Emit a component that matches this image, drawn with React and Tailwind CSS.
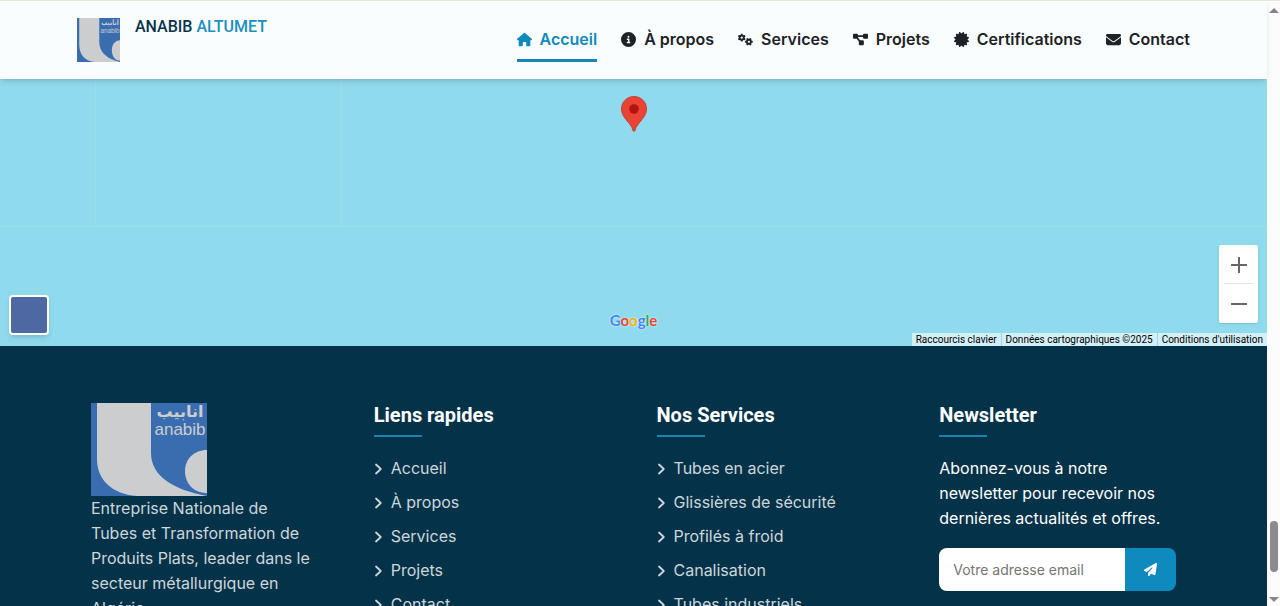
import React, { useState } from "react";
import {
  FaHouse,
  FaCircleInfo,
  FaGears,
  FaDiagramProject,
  FaCertificate,
  FaEnvelope,
  FaPaperPlane,
} from "react-icons/fa6";

const navItems = [
  { label: "Accueil", icon: FaHouse },
  { label: "À propos", icon: FaCircleInfo },
  { label: "Services", icon: FaGears },
  { label: "Projets", icon: FaDiagramProject },
  { label: "Certifications", icon: FaCertificate },
  { label: "Contact", icon: FaEnvelope },
];

const quickLinks = ["Accueil", "À propos", "Services", "Projets", "Contact"];

const services = [
  "Tubes en acier",
  "Glissières de sécurité",
  "Profilés à froid",
  "Canalisation",
  "Tubes industriels",
];

function Logo({ className }) {
  return (
    <svg
      className={className}
      viewBox="0 0 116 93"
      preserveAspectRatio="none"
      role="img"
      aria-label="Anabib"
    >
      <rect width="116" height="93" fill="#3a6db0" />
      <path
        d="M6 0H60V50C60 74 84 87 116 93H46C20 91 6 76 6 56Z"
        fill="#cbcdce"
      />
      <path d="M116 47C103 47 94 56 94 68C94 81 103 90 116 90Z" fill="#cbcdce" />
      <text
        x="89"
        y="14"
        textAnchor="middle"
        fill="#cbcdce"
        fontFamily="DejaVu Sans, sans-serif"
        fontWeight="700"
        fontSize="16"
      >
        انابيب
      </text>
      <text
        x="89"
        y="32"
        textAnchor="middle"
        fill="#cbcdce"
        fontFamily="Liberation Sans, sans-serif"
        fontSize="17"
      >
        anabib
      </text>
    </svg>
  );
}

function Header() {
  return (
    <header className="relative z-10 border-t border-[#e0ebd6] bg-[#fafdfe] shadow-md">
      <div className="mx-auto flex h-[78px] max-w-[1113px] items-center justify-between">
        <a href="#accueil" className="flex items-start gap-[15px]">
          <Logo className="h-11 w-[43px]" />
          <span className="font-[Roboto] text-base leading-[18px] font-medium text-[#05334a]">
            ANABIB <span className="text-[#1a8fc0]">ALTUMET</span>
          </span>
        </a>
        <nav className="flex gap-6">
          {navItems.map(({ label, icon: Icon }, i) => (
            <a
              key={label}
              href="#"
              className={
                i === 0
                  ? "flex items-center gap-2 border-b-3 border-[#1485b5] pt-[9px] pb-2 font-semibold text-[#0f8abb]"
                  : "flex items-center gap-2 border-b-3 border-transparent pt-[9px] pb-2 font-semibold text-[#1d2226]"
              }
            >
              <Icon className="h-[15px] w-auto" />
              {label}
            </a>
          ))}
        </nav>
      </div>
    </header>
  );
}

function MapSection() {
  return (
    <section
      aria-label="Carte"
      className="relative h-[267px] bg-[#90daee] font-[Roboto]"
    >
      {/* tile seams */}
      <div className="absolute top-0 left-[95px] h-[147px] w-[247px] border border-t-0 border-[#99ddef]" />
      <div className="absolute top-[147px] left-0 w-full border-t border-[#99ddef]" />

      <svg
        className="absolute top-[17px] left-1/2 h-9 w-[26px] -translate-x-1/2"
        viewBox="0 0 26 36"
      >
        <path
          d="M13 .5C6 .5.5 6 .5 13c0 4 1.800 7 4.500 10.500C8.500 28 11 30 12 34.500q1 2 2 0C15 30 17.500 28 21 23.500 23.700 20 25.500 17 25.500 13 25.500 6 20 .5 13 .5Z"
          fill="#ea4335"
          stroke="#c5413a"
          strokeWidth="1"
        />
        <circle cx="13" cy="13" r="4.800" fill="#b31412" />
      </svg>

      <button
        aria-label="Vue satellite"
        className="absolute bottom-[11px] left-[9px] size-10 rounded-sm border-2 border-white bg-[#4e68a4] shadow-md"
      />

      <div className="absolute bottom-[14px] left-1/2 -translate-x-1/2 font-[Lato] text-[15px] leading-6 font-bold text-[#4285f4] [text-shadow:0_0_2px_#fff]">
        G<span className="text-[#ea4335]">o</span>
        <span className="text-[#f4b400]">o</span>g
        <span className="text-[#34a853]">l</span>
        <span className="text-[#ea4335]">e</span>
      </div>

      <div className="absolute right-[9px] bottom-[23px] flex w-[39px] flex-col items-center rounded-xs bg-white shadow">
        <button
          aria-label="Zoom avant"
          className="flex h-[39px] w-full items-center justify-center"
        >
          <svg className="size-4" viewBox="0 0 16 16" fill="#666">
            <path d="M7 0h2v7h7v2H9v7H7V9H0V7h7Z" />
          </svg>
        </button>
        <div className="absolute top-[38px] h-px w-[29px] bg-[#e6e6e6]" />
        <button
          aria-label="Zoom arrière"
          className="flex h-[39px] w-full items-center justify-center"
        >
          <svg className="size-4" viewBox="0 0 16 16" fill="#666">
            <path d="M0 7h16v2H0Z" />
          </svg>
        </button>
      </div>

      <div className="absolute right-0 bottom-0 flex gap-px text-[10px] leading-[13px] text-black">
        <button className="bg-[#d3eff7] px-1">Raccourcis clavier</button>
        <span className="bg-[#d3eff7] px-1">
          Données cartographiques ©2025
        </span>
        <a href="#" className="bg-[#d3eff7] px-1">
          Conditions d'utilisation
        </a>
      </div>
    </section>
  );
}

function FooterTitle({ children }) {
  return (
    <h4 className="mb-[19px] font-[Roboto] text-xl leading-6 font-bold text-white">
      {children}
      <span className="mt-2 block h-0.5 w-12 bg-[#1485b5]" />
    </h4>
  );
}

function FooterLinks({ title, links }) {
  return (
    <div>
      <FooterTitle>{title}</FooterTitle>
      <ul className="space-y-[9px]">
        {links.map((link) => (
          <li key={link}>
            <a
              href="#"
              className="flex items-center gap-2 leading-[25px] whitespace-nowrap text-[#cdd6db]"
            >
              <svg
                className="h-3 w-[9px]"
                viewBox="0 0 9 12"
                fill="none"
                stroke="currentColor"
                strokeWidth="1.8"
                strokeLinecap="round"
                strokeLinejoin="round"
              >
                <path d="M2 1.500L6.800 6 2 10.500" />
              </svg>
              {link}
            </a>
          </li>
        ))}
      </ul>
    </div>
  );
}

function Footer() {
  const [email, setEmail] = useState("");

  return (
    <footer className="bg-[#043248] pt-[57px] pb-12">
      <div className="mx-auto grid max-w-[1085px] grid-cols-4 gap-[46px]">
        <div>
          <Logo className="h-[93px] w-[116px]" />
          <p className="max-w-[224px] leading-[25px] text-[#cdd6db]">
            Entreprise Nationale de Tubes et Transformation de Produits Plats,
            leader dans le secteur métallurgique en Algérie.
          </p>
        </div>
        <FooterLinks title="Liens rapides" links={quickLinks} />
        <FooterLinks title="Nos Services" links={services} />
        <div>
          <FooterTitle>Newsletter</FooterTitle>
          <p className="leading-[25px] text-white">
            Abonnez-vous à notre newsletter pour recevoir nos dernières
            actualités et offres.
          </p>
          <form
            className="mt-[17px] flex h-[43px] overflow-hidden rounded-lg"
            onSubmit={(e) => e.preventDefault()}
          >
            <input
              type="email"
              aria-label="Votre adresse email"
              placeholder="Votre adresse email"
              value={email}
              onChange={(e) => setEmail(e.target.value)}
              className="min-w-0 flex-1 bg-white px-[14px] text-sm text-gray-800 placeholder:text-[#757575]"
            />
            <button
              type="submit"
              aria-label="S'inscrire"
              className="flex w-[51px] items-center justify-center bg-[#0f8abf] text-white"
            >
              <FaPaperPlane className="size-[13px]" />
            </button>
          </form>
        </div>
      </div>
    </footer>
  );
}

function ScrollRail() {
  return (
    <div className="flex w-[13px] shrink-0 flex-col items-center border-t border-[#e0ebd6] bg-[#fcfcfc] pt-[7px] pb-1">
      <svg className="h-[5px] w-[10px]" viewBox="0 0 10 5" fill="#858585">
        <path d="M5 0l5 5H0Z" />
      </svg>
      <div className="grow-[20]" />
      <div className="h-[51px] w-2 rounded-full bg-[#8b8b8b]" />
      <div className="grow" />
      <svg className="h-[5px] w-[10px]" viewBox="0 0 10 5" fill="#858585">
        <path d="M0 0h10L5 5Z" />
      </svg>
    </div>
  );
}

export default function App() {
  return (
    <div className="flex h-screen overflow-hidden font-[Inter,sans-serif] text-base">
      <main className="min-w-0 flex-1">
        <Header />
        <MapSection />
        <Footer />
      </main>
      <ScrollRail />
    </div>
  );
}
